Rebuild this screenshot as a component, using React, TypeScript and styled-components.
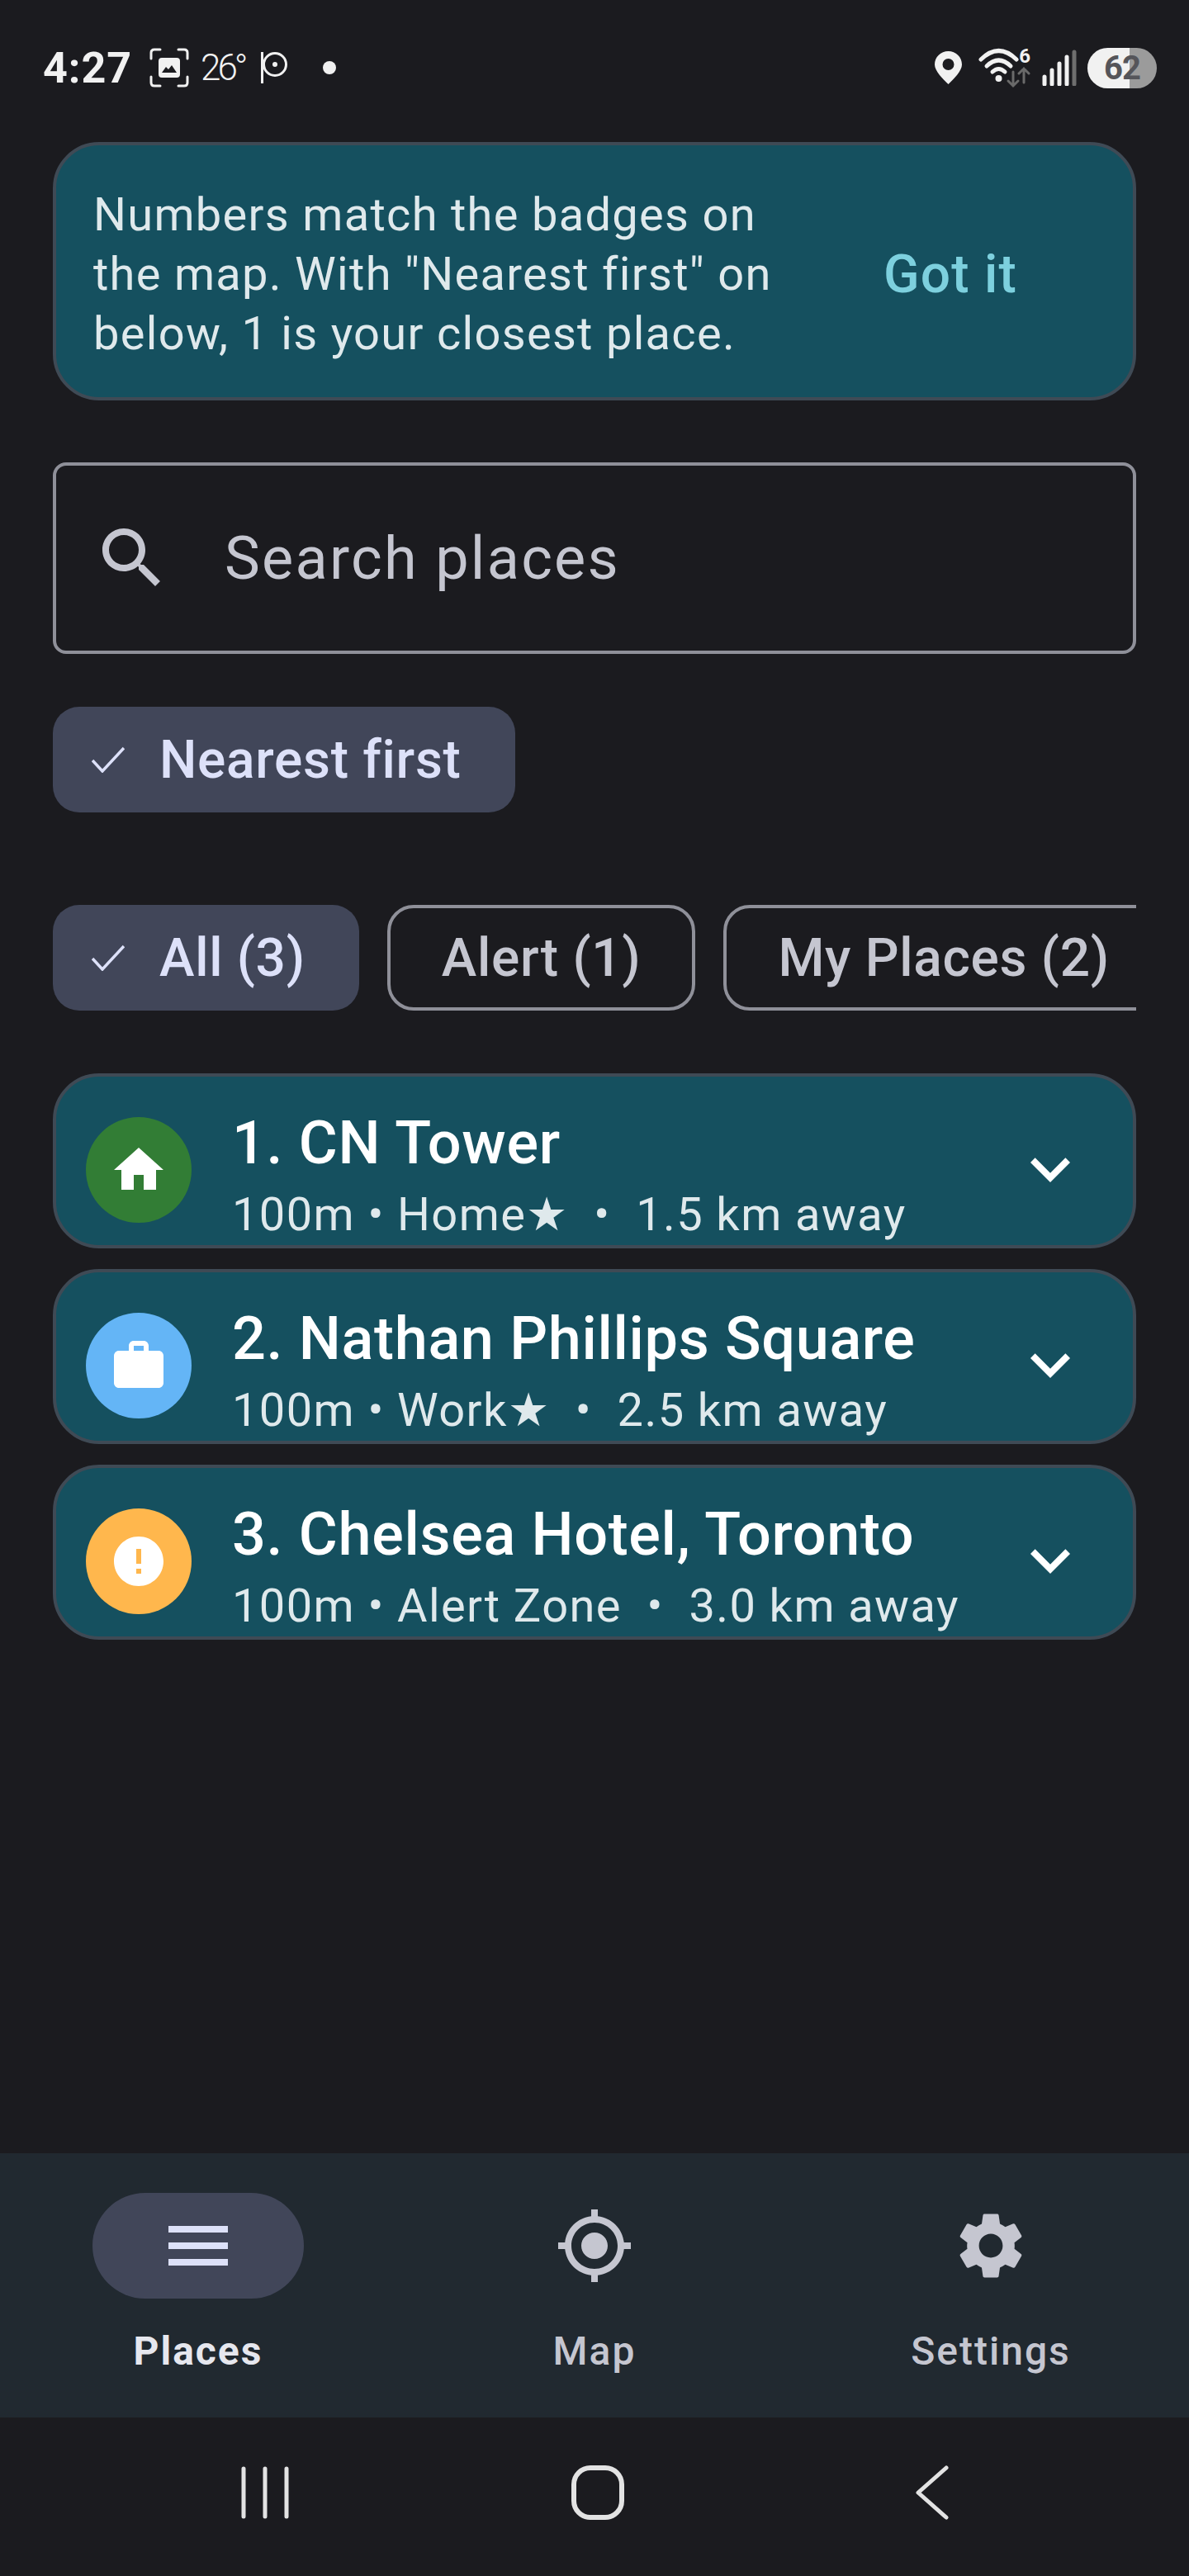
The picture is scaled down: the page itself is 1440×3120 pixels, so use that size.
import React from "react";
import styled, { createGlobalStyle } from "styled-components";

const GlobalStyle = createGlobalStyle`
  html, body {
    margin: 0;
    padding: 0;
    background: #1b1b1f;
  }
  * {
    box-sizing: border-box;
  }
`;

const Screen = styled.div`
  width: 1440px;
  height: 3120px;
  display: flex;
  flex-direction: column;
  background: #1b1b1f;
  font-family: Roboto, "Noto Sans", sans-serif;
  overflow: hidden;
`;

const StatusBar = styled.div`
  height: 164px;
  flex: none;
  display: flex;
  align-items: center;
  padding: 0 39px 0 52px;
  color: #f1f1f1;
`;

const Clock = styled.span`
  font-size: 52px;
  font-weight: 700;
  letter-spacing: 1px;
  width: 129px;
`;

const Temp = styled.span`
  width: 52px;
  font-size: 44px;
  font-weight: 300;
  letter-spacing: -4px;
  margin: 0 21px 0 14px;
`;

const StatusDot = styled.span`
  width: 16px;
  height: 16px;
  border-radius: 50%;
  background: #f1f1f1;
  margin-left: 43px;
`;

const StatusSpacer = styled.div`
  flex: 1;
`;

const WifiBox = styled.div`
  position: relative;
  width: 63px;
  height: 60px;
  margin: 0 14px 0 20px;
`;

const WifiSix = styled.span`
  position: absolute;
  right: 0;
  top: 2px;
  font-size: 24px;
  font-weight: 700;
  line-height: 28px;
`;

const Battery = styled.div`
  width: 84px;
  height: 49px;
  margin-left: 13px;
  border-radius: 25px;
  display: flex;
  align-items: center;
  justify-content: center;
  background: linear-gradient(90deg, #f1f1f1 0 61%, #9b9b9b 61% 100%);
  color: #55555a;
  font-size: 40px;
  font-weight: 700;
  letter-spacing: -1px;
`;

const Content = styled.main`
  flex: 1;
  display: flex;
  flex-direction: column;
  padding: 8px 64px 0;
`;

const Banner = styled.section`
  height: 313px;
  flex: none;
  display: flex;
  align-items: center;
  justify-content: space-between;
  padding: 7px 140px 0 45px;
  background: #15505f;
  border: 4px solid #3f4a55;
  border-radius: 56px;
`;

const BannerText = styled.p`
  margin: 0;
  width: 880px;
  color: #dfe9ec;
  font-size: 56px;
  line-height: 72px;
  letter-spacing: 1.3px;
`;

const GotIt = styled.span`
  color: #7dd0de;
  font-size: 64px;
  font-weight: 500;
  letter-spacing: 1.2px;
`;

const SearchBox = styled.div`
  height: 232px;
  flex: none;
  margin-top: 75px;
  display: flex;
  align-items: center;
  gap: 64px;
  padding-left: 44px;
  border: 4px solid #8f9099;
  border-radius: 16px;
  color: #c5c6d0;
`;

const SearchLabel = styled.span`
  font-size: 72px;
  letter-spacing: 2.3px;
`;

const FilterRow = styled.div`
  display: flex;
  flex: none;
  gap: 34px;
  overflow: hidden;
`;

const SortRow = styled(FilterRow)`
  margin-top: 64px;
`;

const ChipRow = styled(FilterRow)`
  margin-top: 112px;
`;

const Chip = styled.div<{ $selected?: boolean }>`
  flex: none;
  height: 128px;
  display: flex;
  align-items: center;
  gap: 42px;
  padding: ${(props) => (props.$selected ? "0 65px 0 47px" : "0 62px")};
  border-radius: 32px;
  background: ${(props) => (props.$selected ? "#414659" : "transparent")};
  border: ${(props) => (props.$selected ? "none" : "4px solid #8f9099")};
  color: ${(props) => (props.$selected ? "#dde1f9" : "#c5c6d0")};
  font-size: 64px;
  font-weight: 500;
  letter-spacing: 0.7px;
`;

const PlaceList = styled.div`
  display: flex;
  flex-direction: column;
  gap: 25px;
  margin-top: 76px;
`;

const PlaceCard = styled.article`
  height: 212px;
  display: flex;
  align-items: flex-start;
  padding: 49px 52px 0 36px;
  background: #15505f;
  border: 4px solid #3f4a55;
  border-radius: 56px;
  overflow: hidden;
`;

const Badge = styled.div<{ $color: string }>`
  width: 128px;
  height: 128px;
  flex: none;
  display: flex;
  align-items: center;
  justify-content: center;
  border-radius: 50%;
  background: ${(props) => props.$color};
  color: #fff;
`;

const PlaceBody = styled.div`
  flex: 1;
  margin: -14px 0 0 49px;
`;

const PlaceName = styled.div`
  color: #fff;
  font-size: 72px;
  font-weight: 500;
  line-height: 92px;
  letter-spacing: 0.67px;
`;

const PlaceMeta = styled.div`
  color: #dfe9ec;
  font-size: 56px;
  line-height: 80px;
  letter-spacing: 1.4px;
  white-space: pre;
`;

const Chevron = styled.svg`
  flex: none;
  margin-top: 15px;
  color: #fff;
`;

const BottomNav = styled.nav`
  height: 320px;
  flex: none;
  display: grid;
  grid-template-columns: repeat(3, 1fr);
  background: #212930;
`;

const NavItem = styled.div<{ $active?: boolean }>`
  display: flex;
  flex-direction: column;
  align-items: center;
  padding-top: 48px;
  color: ${(props) => (props.$active ? "#e6e7ee" : "#c5c6d0")};
`;

const NavIcon = styled.div<{ $active?: boolean }>`
  width: 256px;
  height: 128px;
  display: flex;
  align-items: center;
  justify-content: center;
  border-radius: 64px;
  background: ${(props) => (props.$active ? "#414659" : "transparent")};
  color: ${(props) => (props.$active ? "#dde1f9" : "#c5c6d0")};
`;

const NavLabel = styled.span<{ $active?: boolean }>`
  margin-top: 32px;
  font-size: 48px;
  font-weight: ${(props) => (props.$active ? 700 : 500)};
  line-height: 64px;
  letter-spacing: 2px;
`;

const SystemNav = styled.div`
  height: 192px;
  flex: none;
  display: grid;
  grid-template-columns: 400px 416px auto;
  align-items: center;
  justify-items: start;
  padding: 0 0 10px 292px;
  color: #e3e3e3;
`;

const Icon = ({ d, size = 96 }: { d: string; size?: number }) => (
  <svg width={size} height={size} viewBox="0 0 24 24" fill="currentColor">
    <path d={d} />
  </svg>
);

const CheckMark = () => (
  <svg width="40" height="32" viewBox="0 0 40 32" fill="none" stroke="currentColor" strokeWidth="3.5">
    <path d="M1 17l12 13L39 2" />
  </svg>
);

const paths = {
  search:
    "M15.5 14h-.79l-.28-.27C15.41 12.59 16 11.11 16 9.5 16 5.91 13.09 3 9.5 3S3 5.91 3 9.5 5.91 16 9.5 16c1.61 0 3.09-.59 4.23-1.57l.27.28v.79l5 4.99L20.49 19l-4.99-5zm-6 0C7.01 14 5 11.99 5 9.5S7.01 5 9.5 5 14 7.01 14 9.5 11.99 14 9.5 14z",
  home: "M10 20v-6h4v6h5v-8h3L12 3 2 12h3v8z",
  work: "M20 6h-4V4c0-1.11-.89-2-2-2h-4c-1.11 0-2 .89-2 2v2H4c-1.11 0-1.99.89-1.99 2L2 19c0 1.11.89 2 2 2h16c1.11 0 2-.89 2-2V8c0-1.11-.89-2-2-2zm-6 0h-4V4h4v2z",
  alert:
    "M12 2C6.48 2 2 6.48 2 12s4.48 10 10 10 10-4.48 10-10S17.52 2 12 2zm1 15h-2v-2h2v2zm0-4h-2V7h2v6z",
  menu: "M3 18h18v-2H3v2zm0-5h18v-2H3v2zm0-7v2h18V6H3z",
  location:
    "M12 8c-2.21 0-4 1.79-4 4s1.79 4 4 4 4-1.79 4-4-1.79-4-4-4zm8.94 3c-.46-4.17-3.77-7.48-7.94-7.94V1h-2v2.06C6.83 3.52 3.52 6.83 3.06 11H1v2h2.06c.46 4.17 3.77 7.48 7.94 7.94V23h2v-2.06c4.17-.46 7.48-3.77 7.94-7.94H23v-2h-2.06zM12 19c-3.87 0-7-3.13-7-7s3.13-7 7-7 7 3.13 7 7-3.13 7-7 7z",
  settings:
    "M19.14 12.94c.04-.3.06-.61.06-.94 0-.32-.02-.64-.07-.94l2.03-1.58c.18-.14.23-.41.12-.61l-1.92-3.32c-.12-.22-.37-.29-.59-.22l-2.39.96c-.5-.38-1.03-.7-1.62-.94l-.36-2.54c-.04-.24-.24-.41-.48-.41h-3.84c-.24 0-.43.17-.47.41l-.36 2.54c-.59.24-1.13.57-1.62.94l-2.39-.96c-.22-.08-.47 0-.59.22L2.74 8.87c-.12.21-.08.47.12.61l2.03 1.58c-.05.3-.09.63-.09.94s.02.64.07.94l-2.03 1.58c-.18.14-.23.41-.12.61l1.92 3.32c.12.22.37.29.59.22l2.39-.96c.5.38 1.03.7 1.62.94l.36 2.54c.05.24.24.41.48.41h3.84c.24 0 .44-.17.47-.41l.36-2.54c.59-.24 1.13-.56 1.62-.94l2.39.96c.22.08.47 0 .59-.22l1.92-3.32c.12-.22.07-.47-.12-.61l-2.01-1.58zM12 15.6c-1.98 0-3.6-1.62-3.6-3.6s1.62-3.6 3.6-3.6 3.6 1.62 3.6 3.6-1.62 3.6-3.6 3.6z",
  chevron: "M7.41 8.59 12 13.17l4.59-4.58L18 10l-6 6-6-6 1.41-1.41z",
};

const places = [
  { name: "1. CN Tower", meta: "100m • Home★  •  1.5 km away", color: "#327d35", icon: paths.home },
  { name: "2. Nathan Phillips Square", meta: "100m • Work★  •  2.5 km away", color: "#64b5f6", icon: paths.work },
  { name: "3. Chelsea Hotel, Toronto", meta: "100m • Alert Zone  •  3.0 km away", color: "#ffb74d", icon: paths.alert },
];

const App = () => {
  return (
    <Screen>
      <GlobalStyle />
      <StatusBar>
        <Clock>4:27</Clock>
        <svg width="48" height="48" viewBox="0 0 48 48" fill="none">
          <path
            d="M2 13V6q0-4 4-4h7M35 2h7q4 0 4 4v7M46 35v7q0 4-4 4h-7M13 46H6q-4 0-4-4v-7"
            stroke="#f1f1f1"
            strokeWidth="3"
            strokeLinecap="round"
          />
          <rect x="11" y="12" width="26" height="24" rx="4" fill="#f1f1f1" />
          <path d="M15 30l5-7 3 3 4-5 6 9z" fill="#1b1b1f" />
        </svg>
        <Temp>26°</Temp>
        <svg width="32" height="38" viewBox="0 0 32 38" fill="none" stroke="#f1f1f1">
          <path d="M1.5 0v38" strokeWidth="3" />
          <circle cx="17" cy="15" r="13.5" strokeWidth="3" />
          <circle cx="17" cy="15" r="3" fill="#f1f1f1" stroke="none" />
        </svg>
        <StatusDot />
        <StatusSpacer />
        <svg width="33" height="40" viewBox="0 0 33 40">
          <path
            fillRule="evenodd"
            fill="#f1f1f1"
            d="M16.5 0C7.4 0 0 7.2 0 16.2 0 24 10 33.5 16.5 40 23 33.5 33 24 33 16.2 33 7.2 25.6 0 16.5 0zm0 9a7 7 0 1 1 0 14 7 7 0 0 1 0-14z"
          />
        </svg>
        <WifiBox>
          <svg width="63" height="60" viewBox="0 0 63 60" fill="none" strokeLinecap="round">
            <path d="M3 20Q24.5-1 46 20" stroke="#f1f1f1" strokeWidth="5" />
            <path d="M10 28Q24.5 14 39 28" stroke="#f1f1f1" strokeWidth="5" />
            <path d="M17 35Q24.5 28 32 35" stroke="#f1f1f1" strokeWidth="5" />
            <circle cx="24.5" cy="43" r="4" fill="#f1f1f1" />
            <path d="M42 35v17M36 46l6 6 6-6" stroke="#6a6a6a" strokeWidth="3" />
            <path d="M55 48V31M49 37l6-6 6 6" stroke="#6a6a6a" strokeWidth="3" />
          </svg>
          <WifiSix>6</WifiSix>
        </WifiBox>
        <svg width="42" height="44" viewBox="0 0 42 44" strokeWidth="5" strokeLinecap="round">
          <path d="M3 33v9M12 25v17M21 17v25M30 9v33" stroke="#f1f1f1" />
          <path d="M39 3v39" stroke="#6e6e6e" />
        </svg>
        <Battery>62</Battery>
      </StatusBar>

      <Content>
        <Banner>
          <BannerText>
            Numbers match the badges on the map. With "Nearest first" on below, 1 is your closest place.
          </BannerText>
          <GotIt>Got it</GotIt>
        </Banner>

        <SearchBox>
          <Icon d={paths.search} />
          <SearchLabel>Search places</SearchLabel>
        </SearchBox>

        <SortRow>
          <Chip $selected>
            <CheckMark />
            Nearest first
          </Chip>
        </SortRow>

        <ChipRow>
          <Chip $selected>
            <CheckMark />
            All (3)
          </Chip>
          <Chip>Alert (1)</Chip>
          <Chip>My Places (2)</Chip>
        </ChipRow>

        <PlaceList>
          {places.map((place) => (
            <PlaceCard key={place.name}>
              <Badge $color={place.color}>
                <Icon d={place.icon} size={72} />
              </Badge>
              <PlaceBody>
                <PlaceName>{place.name}</PlaceName>
                <PlaceMeta>{place.meta}</PlaceMeta>
              </PlaceBody>
              <Chevron width="96" height="96" viewBox="0 0 24 24" fill="currentColor">
                <path d={paths.chevron} />
              </Chevron>
            </PlaceCard>
          ))}
        </PlaceList>
      </Content>

      <BottomNav>
        <NavItem $active>
          <NavIcon $active>
            <Icon d={paths.menu} />
          </NavIcon>
          <NavLabel $active>Places</NavLabel>
        </NavItem>
        <NavItem>
          <NavIcon>
            <Icon d={paths.location} />
          </NavIcon>
          <NavLabel>Map</NavLabel>
        </NavItem>
        <NavItem>
          <NavIcon>
            <Icon d={paths.settings} />
          </NavIcon>
          <NavLabel>Settings</NavLabel>
        </NavItem>
      </BottomNav>

      <SystemNav>
        <svg width="58" height="64" viewBox="0 0 58 64" stroke="currentColor" strokeWidth="5" strokeLinecap="round">
          <path d="M3 3v58M29 3v58M55 3v58" />
        </svg>
        <svg width="64" height="66" viewBox="0 0 64 66" fill="none" stroke="currentColor" strokeWidth="6">
          <rect x="3" y="3" width="58" height="60" rx="20" />
        </svg>
        <svg width="42" height="66" viewBox="0 0 42 66" fill="none" stroke="currentColor" strokeWidth="5" strokeLinecap="round" strokeLinejoin="round">
          <path d="M38 3L4 33l34 30" />
        </svg>
      </SystemNav>
    </Screen>
  );
};

export default App;
